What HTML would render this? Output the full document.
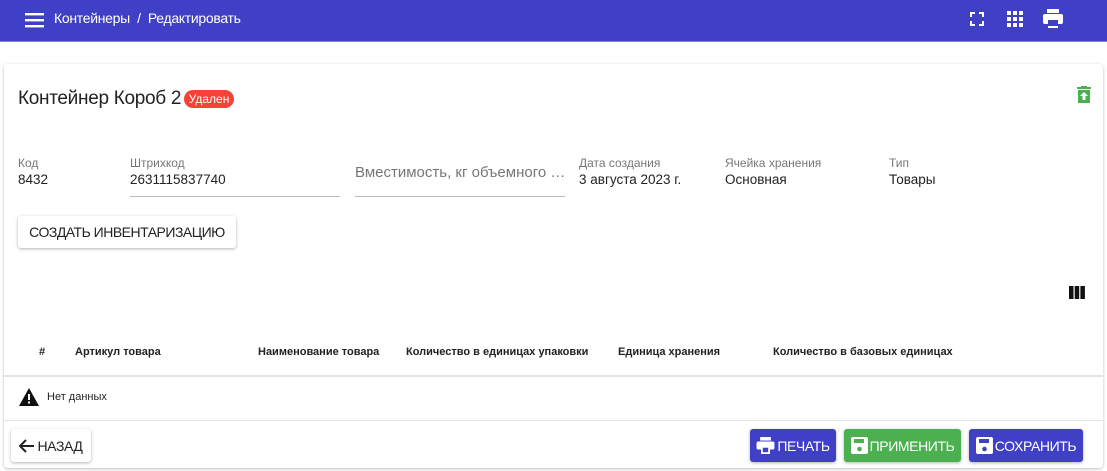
<!DOCTYPE html>
<html><head><meta charset="utf-8"><style>
*{margin:0;padding:0;box-sizing:border-box}
body{width:1107px;height:471px;background:#fff;font-family:"Liberation Sans",sans-serif;position:relative;overflow:hidden;color:#222}
.a{position:absolute;white-space:nowrap}
.hdr{position:absolute;left:0;top:0;width:1107px;height:42px;background:#4040c6;border-bottom:1px solid #8585de}
.card{position:absolute;left:4px;top:64px;width:1099px;height:404px;background:#fff;border-radius:4px;box-shadow:0 1px 3px rgba(0,0,0,.25)}
.lbl{font-size:12px;color:#777}
.val{font-size:13.5px;color:#222}
.th{font-size:11px;font-weight:bold;color:#222}
.btn{position:absolute;top:429px;height:33px;border-radius:3px;color:#fff;font-size:14px;display:flex;align-items:center;justify-content:center;gap:2px;box-shadow:0 1px 3px rgba(0,0,0,.3);letter-spacing:-0.4px}
</style></head><body>
<div class="hdr"></div>
<svg class="a" style="left:25px;top:12px" width="19" height="16" viewBox="0 0 19 16"><rect y="1" width="19" height="2.4" fill="#fff"/><rect y="7" width="19" height="2.4" fill="#fff"/><rect y="13" width="19" height="2.4" fill="#fff"/></svg>
<div class="a" style="left:54px;top:10px;color:#fff;font-size:14px;letter-spacing:-0.3px">Контейнеры &nbsp;/&nbsp; Редактировать</div>
<svg class="a" style="left:970px;top:12px" width="14" height="14" viewBox="0 0 14 14" fill="none" stroke="#fff" stroke-width="2"><path d="M1 5V1h4M9 1h4v4M13 9v4H9M5 13H1V9"/></svg>
<svg class="a" style="left:1007px;top:11px" width="16" height="16" viewBox="0 0 16 16" fill="#fff"><rect x="0" y="0" width="4" height="4"/><rect x="6" y="0" width="4" height="4"/><rect x="12" y="0" width="4" height="4"/><rect x="0" y="6" width="4" height="4"/><rect x="6" y="6" width="4" height="4"/><rect x="12" y="6" width="4" height="4"/><rect x="0" y="12" width="4" height="4"/><rect x="6" y="12" width="4" height="4"/><rect x="12" y="12" width="4" height="4"/></svg>
<svg class="a" style="left:1043px;top:9px" width="20" height="21" viewBox="0 0 20 21" fill="#fff"><rect x="4" y="0" width="12" height="4"/><rect x="0" y="5" width="20" height="10" rx="2"/><rect x="5" y="11" width="10" height="5" fill="#4040c6"/><rect x="5" y="17" width="10" height="2"/></svg>
<div class="card"></div>
<div class="a" style="left:18px;top:88px;font-size:19px;letter-spacing:-0.3px;color:#222">Контейнер Короб 2</div>
<div class="a" style="left:184px;top:90px;width:50px;height:18px;border-radius:9px;background:#f44336;color:#fff;font-size:12px;text-align:center;line-height:18px">Удален</div>
<svg class="a" style="left:1077px;top:86px" width="14" height="17" viewBox="0 0 14 17" fill="#4caf50"><rect x="0" y="1" width="14" height="2"/><rect x="4" y="0" width="6" height="2"/><path d="M1 4h12v13H1z"/><path d="M7 6l-4 4h2.5v4h3v-4H11z" fill="#fff"/></svg>
<div class="a lbl" style="left:18px;top:156px">Код</div><div class="a val" style="left:18px;top:172px">8432</div>
<div class="a lbl" style="left:130px;top:156px">Штрихкод</div><div class="a val" style="left:130px;top:172px">2631115837740</div>
<div class="a" style="left:130px;top:196px;width:210px;height:1px;background:#bbb"></div>
<div class="a" style="left:355px;top:164px;font-size:15px;color:#777">Вместимость, кг объемного …</div>
<div class="a" style="left:355px;top:196px;width:210px;height:1px;background:#bbb"></div>
<div class="a lbl" style="left:579px;top:156px">Дата создания</div><div class="a val" style="left:579px;top:172px">3 августа 2023 г.</div>
<div class="a lbl" style="left:725px;top:156px">Ячейка хранения</div><div class="a val" style="left:725px;top:172px">Основная</div>
<div class="a lbl" style="left:889px;top:156px">Тип</div><div class="a val" style="left:889px;top:172px">Товары</div>
<div class="a" style="left:18px;top:216px;width:218px;height:32px;border-radius:3px;box-shadow:0 1px 3px rgba(0,0,0,.3);font-size:14px;line-height:32px;text-align:center;letter-spacing:-0.5px">СОЗДАТЬ ИНВЕНТАРИЗАЦИЮ</div>
<svg class="a" style="left:1069px;top:286px" width="16" height="13" viewBox="0 0 16 13" fill="#111"><rect x="0" width="4.5" height="13"/><rect x="5.7" width="4.5" height="13"/><rect x="11.4" width="4.5" height="13"/></svg>
<div class="a th" style="left:39px;top:346px">#</div>
<div class="a th" style="left:75px;top:346px">Артикул товара</div>
<div class="a th" style="left:258px;top:346px">Наименование товара</div>
<div class="a th" style="left:406px;top:346px">Количество в единицах упаковки</div>
<div class="a th" style="left:618px;top:346px">Единица хранения</div>
<div class="a th" style="left:773px;top:346px">Количество в базовых единицах</div>
<div class="a" style="left:4px;top:375px;width:1099px;height:2px;background:#e4e4e4"></div>
<svg class="a" style="left:19px;top:388px" width="20" height="18" viewBox="0 0 20 18"><path d="M10 0L20 18H0z" fill="#111"/><rect x="9" y="6" width="2" height="6" fill="#fff"/><rect x="9" y="13.5" width="2" height="2" fill="#fff"/></svg>
<div class="a" style="left:47px;top:391px;font-size:11px">Нет данных</div>
<div class="a" style="left:4px;top:420px;width:1099px;height:1px;background:#e4e4e4"></div>
<div class="btn" style="left:11px;width:80px;color:#222;background:#fff">
<svg width="16" height="14" viewBox="0 0 16 14" fill="none" stroke="#222" stroke-width="2"><path d="M15 7H2M7 1L1 7l6 6"/></svg>НАЗАД</div>
<div class="btn" style="left:750px;width:86px;background:#4040c6">
<svg width="19" height="17" viewBox="0 0 20 19" fill="#fff"><rect x="4" y="0" width="12" height="4"/><rect x="0" y="5" width="20" height="9" rx="2"/><rect x="5" y="11" width="10" height="8"/><rect x="7" y="12" width="6" height="5" fill="#4040c6"/></svg>ПЕЧАТЬ</div>
<div class="btn" style="left:844px;width:117px;background:#4caf50">
<svg width="17" height="17" viewBox="0 0 17 17"><rect width="17" height="17" rx="2" fill="#fff"/><rect x="3" y="2" width="10" height="4" fill="#4caf50"/><circle cx="8.5" cy="12" r="2.3" fill="#4caf50"/></svg>ПРИМЕНИТЬ</div>
<div class="btn" style="left:969px;width:114px;background:#4040c6">
<svg width="17" height="17" viewBox="0 0 17 17"><rect width="17" height="17" rx="2" fill="#fff"/><rect x="3" y="2" width="10" height="4" fill="#4040c6"/><circle cx="8.5" cy="12" r="2.3" fill="#4040c6"/></svg>СОХРАНИТЬ</div>
</body></html>
